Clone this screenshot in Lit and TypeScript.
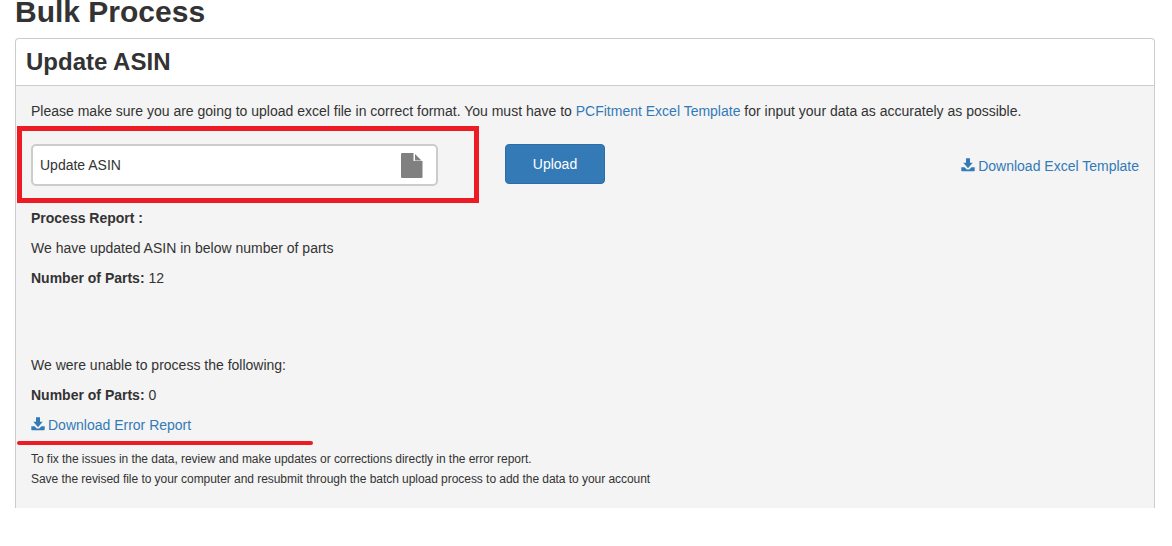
import { LitElement, html, css, svg } from "lit";
import { customElement } from "lit/decorators.js";

const dl = svg`<svg class="dl" viewBox="0 0 14 14" width="14" height="14" aria-hidden="true"><path fill="currentColor" d="M5 0.3h4v4.4h2.7L7 10.2 2.3 4.7H5zM0.3 9.2h3.2l2.3 2.4h2.4l2.3-2.4h3.2v3.3c0 .4-.3.7-.7.7H1c-.4 0-.7-.3-.7-.7z"/></svg>`;

@customElement("app-root")
export class AppRoot extends LitElement {
  static styles = css`
    :host {
      display: block;
      font-family: "Liberation Sans", Arial, sans-serif;
      font-size: 14px;
      line-height: 20px;
      color: #333;
      background: #fff;
      height: 546px;
      overflow: hidden;
    }
    .page {
      display: flex;
      flex-direction: column;
      padding: 0 17px 0 15px;
      position: relative;
    }
    h1 {
      margin: -5px 0 10px;
      font-size: 30px;
      line-height: 33px;
      font-weight: 700;
    }
    .card {
      border: 1px solid #ccc;
      border-bottom: 0;
      border-radius: 4px 4px 0 0;
      height: 470px;
      box-sizing: border-box;
      background: #f4f4f4;
      display: flex;
      flex-direction: column;
    }
    .card-head {
      background: #fff;
      border-bottom: 1px solid #ccc;
      border-radius: 4px 4px 0 0;
      height: 47px;
      box-sizing: border-box;
      padding: 0 10px;
      display: flex;
      align-items: center;
    }
    h2 {
      margin: 0;
      font-size: 24px;
      line-height: 26px;
      font-weight: 700;
    }
    .card-body {
      padding: 15px 15px 0;
    }
    p {
      margin: 0 0 10px;
    }
    a {
      color: #337ab7;
      text-decoration: none;
    }
    .upload-row {
      display: flex;
      align-items: flex-start;
      padding-top: 13px;
      height: 77px;
      box-sizing: border-box;
    }
    .file {
      width: 407px;
      height: 42px;
      box-sizing: border-box;
      border: 2px solid #ccc;
      border-radius: 5px;
      background: #fff;
      display: flex;
      align-items: center;
      justify-content: space-between;
      padding: 0 13px 0 7px;
    }
    .file svg {
      display: block;
    }
    button {
      margin-left: 67px;
      width: 100px;
      height: 40px;
      padding: 0;
      border: 1px solid #2e6da4;
      border-radius: 4px;
      background: #337ab7;
      color: #fff;
      font: inherit;
    }
    .tmpl {
      margin-left: auto;
      margin-top: 12px;
    }
    .dl {
      vertical-align: -1px;
      margin-right: 3px;
    }
    .spacer {
      height: 57px;
    }
    .err {
      margin-bottom: 14px;
    }
    .note {
      font-size: 12px;
      letter-spacing: -0.045px;
      margin: 0;
    }
    .mark-box {
      position: absolute;
      left: 17px;
      top: 126px;
      width: 462px;
      height: 77px;
      box-sizing: border-box;
      border: 5px solid #ed1c24;
      pointer-events: none;
    }
    .mark-line {
      position: absolute;
      left: 17px;
      top: 441px;
      width: 296px;
      height: 4px;
      border-radius: 2px;
      background: #ed1c24;
    }
  `;

  render() {
    return html`
      <div class="page">
        <h1>Bulk Process</h1>
        <section class="card">
          <header class="card-head"><h2>Update ASIN</h2></header>
          <div class="card-body">
            <p>Please make sure you are going to upload excel file in correct format. You must have to <a href="#">PCFitment Excel Template</a> for input your data as accurately as possible.</p>
            <div class="upload-row">
              <div class="file">
                <span>Update ASIN</span>
                <svg viewBox="0 0 22 25" width="22" height="25" aria-hidden="true">
                  <path fill="#808080" d="M1 0h11.5v8H21.5V24a1 1 0 0 1-1 1H1a1 1 0 0 1-1-1V1a1 1 0 0 1 1-1z"/>
                  <path fill="#808080" d="M14 1l6.5 6.5H14z"/>
                </svg>
              </div>
              <button type="button">Upload</button>
              <a class="tmpl" href="#">${dl}Download Excel Template</a>
            </div>
            <p><b>Process Report :</b></p>
            <p>We have updated ASIN in below number of parts</p>
            <p><b>Number of Parts:</b> 12</p>
            <div class="spacer"></div>
            <p>We were unable to process the following:</p>
            <p><b>Number of Parts:</b> 0</p>
            <p class="err"><a href="#">${dl}Download Error Report</a></p>
            <p class="note">To fix the issues in the data, review and make updates or corrections directly in the error report.</p>
            <p class="note">Save the revised file to your computer and resubmit through the batch upload process to add the data to your account</p>
          </div>
        </section>
        <div class="mark-box"></div>
        <div class="mark-line"></div>
      </div>
    `;
  }
}
